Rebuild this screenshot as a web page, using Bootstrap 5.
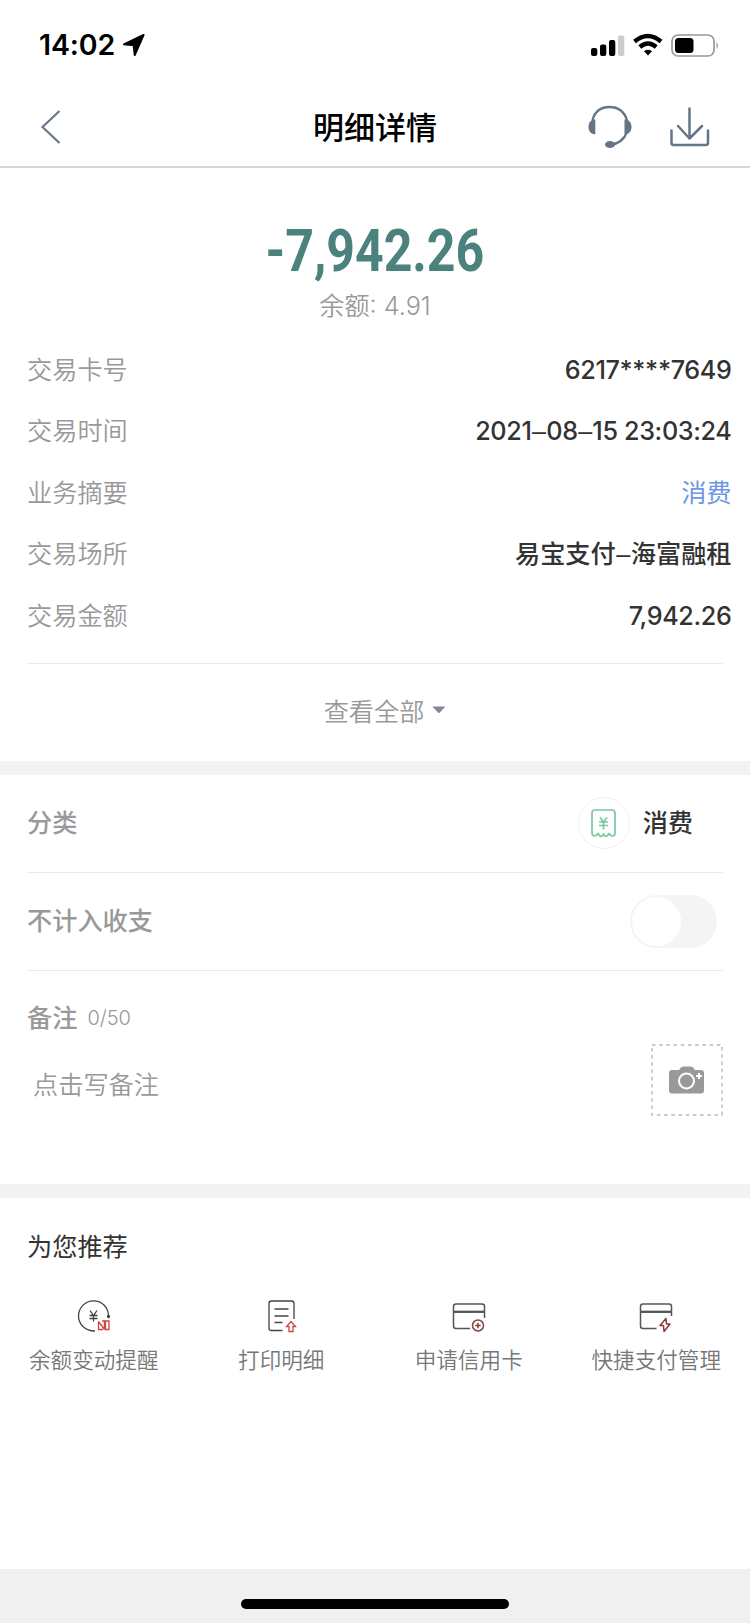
<!DOCTYPE html>
<html lang="zh-CN">
<head>
<meta charset="utf-8">
<meta name="viewport" content="width=device-width, initial-scale=1">
<title>明细详情</title>
<link href="https://cdn.jsdelivr.net/npm/bootstrap@5.3.0/dist/css/bootstrap.min.css" rel="stylesheet">
<style>
body{font-family:Inter,"Noto Sans CJK SC",sans-serif;font-size:25.2px;line-height:1.2;color:#333;background:#fff}
svg{display:block;flex:none}
.screen{height:1623px}
.status{height:88px;padding:2px 29px 0 39px;color:#000}
.clock{font-size:28.5px;font-weight:600;letter-spacing:-.1px}
.topbar{height:80px;padding:0 40px;border-bottom:2px solid #d6d7d9;display:grid;grid-template-columns:1fr auto 1fr}
.page-title{font-size:31px;font-weight:500;color:#000;padding-top:1px}
.header-tools{gap:37px}
.amount{font:700 58.5px/60px Roboto,sans-serif;color:#4b827d;padding-top:53px;height:113px}
.amount>span{display:inline-block;transform:scaleX(.855)}
.balance{height:50px;font-weight:350;color:#999;padding-top:1px}
.detail{height:61.6px;padding:0 18.500px 0 27px}
.key{color:#999;font-weight:350}
.val{font-weight:500}
.num{letter-spacing:-.35px}
.dash{font-family:"Liberation Sans",sans-serif;padding:0 .5px}
.rule{margin:0 27px;border-top:1px solid #e9e9e9}
.more{height:97px;color:#999;padding-left:19px}
.caret{width:13px;height:7px;background:#85869a;clip-path:polygon(0 0,100% 0,50% 100%);margin-bottom:5px}
.band{height:14px;background:#f2f2f2}
.cell{height:97px;padding:0 33px 0 27px}
.cell .key,.memo-title{font-weight:500}
.cat-icon{width:52px;height:52px;border:1.5px solid #f3edef;margin-right:13px}
.toggle{width:87px;height:53px;background:#f4f4f4;padding:2px}
.knob{width:49px;height:49px;background:#fff}
.memo{height:213px;padding:0 27px}
.memo-row{margin-top:11px;padding-left:6px}
.memo-row .key{padding-top:9px}
.count{font-size:20px;font-weight:300;padding-left:2px}
.camera{width:72px;height:72px}
.rec-title{height:98px;padding-left:27px;font-weight:400;color:#333}
.rec-label{font-size:21.6px;color:#777;font-weight:350;margin-top:14px}
.home{height:54px;background:#f0f0f0}
.home-bar{width:268px;height:10px;background:#000;margin-top:15px}
</style>
</head>
<body>
<main class="screen d-flex flex-column overflow-hidden">
  <div class="status d-flex align-items-center justify-content-between">
    <div class="d-flex align-items-center">
      <span class="clock">14:02</span>
      <svg class="ms-2" width="22" height="22" viewBox="0 0 22 22"><path d="M20.5 1 1 10.3 10.7 11.3 11.700 21Z" fill="#000" stroke="#000" stroke-width="2" stroke-linejoin="round"/></svg>
    </div>
    <svg width="130" height="24" viewBox="0 0 130 24">
      <rect x="0" y="15" width="6.3" height="8" rx="2"/><rect x="9" y="11.5" width="6.3" height="11.5" rx="2"/><rect x="18" y="7" width="6.3" height="16" rx="2"/><rect x="27" y="2.500" width="6.3" height="20.500" rx="2" fill="#ccc"/>
      <g fill="none" stroke="#000" stroke-width="4.300"><path d="M43.500 8.500Q57 -2.500 70 8.500"/><path d="M48.800 14Q57 7 65.200 14"/></g><path d="M53 18.200Q57 15.300 61 18.200L57 22.500Z"/>
      <rect x="81" y="2" width="42" height="21" rx="6" fill="none" stroke="#999" stroke-width="1.700"/><rect x="84" y="5" width="18.500" height="15" rx="3.500"/><path d="M125.500 9q3 3.500 0 7z" fill="#999"/>
    </svg>
  </div>
  <header class="topbar align-items-center">
    <svg width="22" height="36" viewBox="0 0 22 36"><path d="M19.500 2 2.500 18 19.500 34" fill="none" stroke="#64798c" stroke-width="2.200"/></svg>
    <h1 class="page-title m-0">明细详情</h1>
    <div class="header-tools d-flex align-items-center justify-content-end">
      <svg width="46" height="44" viewBox="0 0 46 44"><g fill="none" stroke="#667586" stroke-width="2.300"><path d="M5.500 15C8 6 14 2 22.500 2S37 6 40 15"/><path d="M40 27C37 35 31 39 23 40"/></g><g fill="#667586"><path d="M8.300 14.300v15C4 29.300 1.500 26.500 1.500 22s2.500-7.500 6.800-7.700Z"/><path d="M37.500 14.300v15c4.300 0 7-2.800 7-7.300s-2.700-7.500-7-7.700Z"/><ellipse cx="23" cy="39.500" rx="5" ry="3.600"/></g></svg>
      <svg width="40" height="42" viewBox="0 0 40 42"><g fill="none" stroke="#667586" stroke-width="2.500" stroke-linecap="round" stroke-linejoin="round"><path d="M19.500 2.500v30M8 20l11.500 12.500L32 20"/><path d="M1.500 24.500V37q0 2 2 2h32q2.500 0 2.500-2V24.500"/></g></svg>
    </div>
  </header>
  <section>
    <div class="amount text-center"><span>-7,942.26</span></div>
    <div class="balance d-flex align-items-center justify-content-center">余额: 4.91</div>
    <div class="pt-2">
      <div class="detail d-flex align-items-center justify-content-between"><span class="key">交易卡号</span><span class="val num">6217****7649</span></div>
      <div class="detail d-flex align-items-center justify-content-between"><span class="key">交易时间</span><span class="val num">2021<span class="dash">–</span>08<span class="dash">–</span>15 23:03:24</span></div>
      <div class="detail d-flex align-items-center justify-content-between"><span class="key">业务摘要</span><span style="color:#6f97e6">消费</span></div>
      <div class="detail d-flex align-items-center justify-content-between"><span class="key">交易场所</span><span class="val">易宝支付<span class="dash">–</span>海富融租</span></div>
      <div class="detail d-flex align-items-center justify-content-between"><span class="key">交易金额</span><span class="val num">7,942.26</span></div>
    </div>
    <div class="pt-3"><div class="rule"></div></div>
    <div class="more d-flex align-items-center justify-content-center"><span class="key">查看全部</span><i class="caret ms-2"></i></div>
  </section>
  <div class="band"></div>
  <section>
    <div class="cell d-flex align-items-center justify-content-between">
      <span class="key">分类</span>
      <div class="d-flex align-items-center me-4">
        <span class="cat-icon rounded-circle d-flex align-items-center justify-content-center">
          <svg width="25" height="29" viewBox="0 0 25 29" fill="none" stroke="#79c79d" stroke-width="1.700" stroke-linejoin="round"><path d="M1 24V4q0-3 3-3h17q3 0 3 3v20q0 3-2.500 3-2 0-3.500-2.500Q16 27.500 15 27.500T12.500 25Q11 27.500 10 27.500T7 24.500Q5.500 27 3.500 27 1 27 1 24Z"/><path d="M9 8.500l3.500 4.500 3.500-4.500M8 13h9M8 16.500h9M12.500 13v7.500"/></svg>
        </span>
        <span class="val">消费</span>
      </div>
    </div>
    <div class="rule"></div>
    <div class="cell d-flex align-items-center justify-content-between"><span class="key">不计入收支</span><div class="toggle rounded-pill"><div class="knob rounded-circle"></div></div></div>
    <div class="rule"></div>
    <div class="memo">
      <div class="d-flex align-items-center pt-4"><span class="memo-title key pt-2">备注</span><span class="key count pt-2 ms-2">0/50</span></div>
      <div class="memo-row d-flex align-items-center justify-content-between"><span class="key">点击写备注</span>
        <svg class="camera" viewBox="0 0 72 72"><rect x="1" y="1" width="70" height="70" fill="none" stroke="#c9c9c9" stroke-width="1.800" stroke-dasharray="3.500 3.700"/><path d="M18 29q0-3 3-3h7l2-2.500q1-1 2.500-1h7q1.500 0 2.500 1l2 2.500h6q3 0 3 3v17.500q0 3-3 3H21q-3 0-3-3Z" fill="#999"/><circle cx="35.500" cy="37" r="7.500" fill="none" stroke="#fff" stroke-width="2"/><path d="M48 29v6M45 32h6" stroke="#fff" stroke-width="2"/></svg>
      </div>
    </div>
  </section>
  <div class="band"></div>
  <section class="flex-grow-1">
    <div class="rec-title d-flex align-items-center">为您推荐</div>
    <div class="row g-0 text-center">
      <div class="col-3 d-flex flex-column align-items-center"><svg width="34" height="38" viewBox="0 0 34 38" fill="none" stroke="#444" stroke-width="1.300"><path d="M18 35C8 35 1.500 28 1.500 20S8 4.800 16.500 4.800 31 11 31.500 19.500"/><circle cx="31.500" cy="20.500" r="1" fill="#444"/><path d="M13 14.500l3.500 5 3.500-5M12.500 19.500h8M12.500 22.500h8M16.500 19.500v6"/><path d="M21.500 25.500v8h4.500M21.500 25.500l6 8M25 25h2.500v8.500M28.500 25h3.500v8.500h-3.500z" stroke="#d0443f"/></svg><span class="rec-label">余额变动提醒</span></div>
      <div class="col-3 d-flex flex-column align-items-center"><svg width="34" height="38" viewBox="0 0 34 38" fill="none" stroke="#444" stroke-width="1.300"><path d="M18.500 34.500H7.500q-2.500 0-2.500-2.500V7.500Q5 5 7.500 5h20Q30 5 30 7.500V23"/><path d="M10.500 13h14M10.500 20h14M10.500 26.500h8"/><path d="M27 25.500l-4.500 5h2.500v5h4v-5h2.500z" stroke="#d0443f"/></svg><span class="rec-label">打印明细</span></div>
      <div class="col-3 d-flex flex-column align-items-center"><svg width="34" height="38" viewBox="0 0 34 38" fill="none" stroke="#555" stroke-width="1.500"><path d="M18 32.500H4q-2.500 0-2.500-2.500V10.500Q1.500 8 4 8h26q2.500 0 2.500 2.500V22"/><path d="M1.500 15.800h31" stroke-width="2.300"/><circle cx="26" cy="29.500" r="5.500" stroke="#774743"/><path d="M26 26.800v5.500M23.200 29.500h5.500" stroke="#8b3a36"/></svg><span class="rec-label">申请信用卡</span></div>
      <div class="col-3 d-flex flex-column align-items-center"><svg width="34" height="38" viewBox="0 0 34 38" fill="none" stroke="#555" stroke-width="1.500"><path d="M17.500 32.500H4q-2.500 0-2.500-2.500V10.500Q1.500 8 4 8h26q2.500 0 2.500 2.500V20"/><path d="M1.500 15.800h31" stroke-width="2.300"/><path d="M27 22.500l-6 7h3.500l.5 6 6-7.500h-3.500z" stroke="#8b3a36" stroke-linejoin="round"/></svg><span class="rec-label">快捷支付管理</span></div>
    </div>
  </section>
  <footer class="home d-flex align-items-center justify-content-center"><div class="home-bar rounded-pill"></div></footer>
</main>
<script src="https://cdn.jsdelivr.net/npm/bootstrap@5.3.0/dist/js/bootstrap.bundle.min.js"></script>
</body>
</html>
